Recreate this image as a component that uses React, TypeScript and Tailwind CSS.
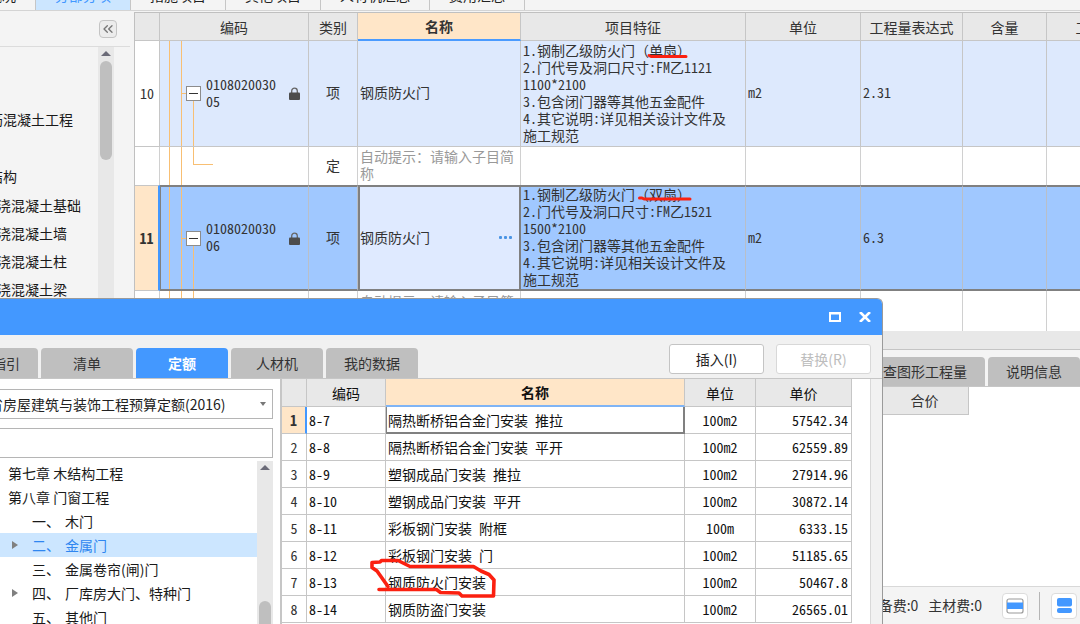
import type { ReactNode } from "react";
import clsx from "clsx";
import { ChevronsLeft } from "lucide-react";

const mainTabs = ["工程概况", "分部分项", "措施项目", "其他项目", "人材机汇总", "费用汇总"];

const dialogTabs = ["清单指引", "清单", "定额", "人材机", "我的数据"];

const chapters = [
  { title: "第七章 木结构工程" },
  { title: "第八章 门窗工程" },
];

const sections = [
  { no: "一、", title: "木门" },
  { no: "二、", title: "金属门", expandable: true, active: true },
  { no: "三、", title: "金属卷帘(闸)门" },
  { no: "四、", title: "厂库房大门、特种门", expandable: true },
  { no: "五、", title: "其他门" },
];

const quotas = [
  { code: "8-7", name: "隔热断桥铝合金门安装 推拉", unit: "100m2", price: "57542.34" },
  { code: "8-8", name: "隔热断桥铝合金门安装 平开", unit: "100m2", price: "62559.89" },
  { code: "8-9", name: "塑钢成品门安装 推拉", unit: "100m2", price: "27914.96" },
  { code: "8-10", name: "塑钢成品门安装 平开", unit: "100m2", price: "30872.14" },
  { code: "8-11", name: "彩板钢门安装 附框", unit: "100m", price: "6333.15" },
  { code: "8-12", name: "彩板钢门安装 门", unit: "100m2", price: "51185.65" },
  { code: "8-13", name: "钢质防火门安装", unit: "100m2", price: "50467.8" },
  { code: "8-14", name: "钢质防盗门安装", unit: "100m2", price: "26565.01" },
];

function LockIcon() {
  return (
    <svg className="h-[13px] w-[11px]" viewBox="0 0 11 13" fill="none">
      <path d="M2.7 6.5V4a2.8 2.8 0 0 1 5.6 0v2.5" stroke="#666" strokeWidth="1.3" />
      <rect y="5.5" width="11" height="7.5" rx="1" fill="#4d4d4d" />
    </svg>
  );
}

function Triangle({ className, points }: { className: string; points: string }) {
  return (
    <svg className={className} viewBox="0 0 10 10" preserveAspectRatio="none">
      <polygon points={points} fill="currentColor" />
    </svg>
  );
}

/* Code cell with the tree guides drawn in front of the number */
function CodeCell({ lines, className }: { lines: string[]; className: string }) {
  return (
    <div className={clsx("flex items-stretch", className)}>
      <div className="w-[10px] border-r border-r-[#f8bf73]" />
      <div className="w-3 border-r border-r-[#f8bf73]" />
      <div className="flex w-6 flex-col">
        <div className="flex-1" />
        <div className="flex items-center">
          <div className="h-px w-1 bg-[#f8bf73]" />
          <button
            aria-label="折叠"
            className="flex h-[15px] w-[15px] items-center justify-center border border-[#8c8c8c] bg-white"
          >
            <span className="h-px w-[9px] bg-[#333]" />
          </button>
        </div>
        <div className="ml-[11px] flex-1 border-l border-l-[#f8bf73]" />
      </div>
      <div className="w-[83px] self-center pb-[2px]">
        {lines.map((line) => (
          <div key={line}>{line}</div>
        ))}
      </div>
      <div className="self-center">
        <LockIcon />
      </div>
    </div>
  );
}

function Features({ kind, model, opening }: { kind: string; model: string; opening: string }) {
  return (
    <div className="-my-px pb-[2px] pl-[2px] whitespace-nowrap">
      <div>
        1.钢制乙级防火门
        <span className="[font-feature-settings:normal]">（{kind}）</span>
      </div>
      <div>2.门代号及洞口尺寸:FM乙{model}</div>
      <div>{opening}</div>
      <div>3.包含闭门器等其他五金配件</div>
      <div>4.其它说明:详见相关设计文件及</div>
      <div>施工规范</div>
    </div>
  );
}

function Th({ children, className }: { children?: ReactNode; className?: string }) {
  return (
    <th
      className={clsx(
        "overflow-hidden border-r border-[#c6c6c6] p-0 text-center whitespace-nowrap",
        className ?? "border-b bg-[#e8e8e8] font-normal"
      )}
    >
      {children}
    </th>
  );
}

function BillSheet() {
  const light = "border-r border-b border-[#c6c6c6] p-0";
  const plain = "border-r border-[#d0d0d0] p-0";
  const picked = "border-y-2 border-r border-y-[#808080] border-r-[#b9bfc8] p-0";

  return (
    <div className="overflow-hidden border-t border-l border-[#c0c0c0] bg-white">
      <table className="w-[1012px] table-fixed border-separate border-spacing-0 text-[14px] text-[#333] [font-feature-settings:'hwid']">
        <colgroup>
          <col className="w-[25px]" />
          <col className="w-[149px]" />
          <col className="w-[49px]" />
          <col className="w-[163px]" />
          <col className="w-[225px]" />
          <col className="w-[115px]" />
          <col className="w-[102px]" />
          <col className="w-[84px]" />
          <col className="w-[100px]" />
        </colgroup>
        <thead className="leading-5">
          <tr className="h-7">
            <Th />
            <Th>编码</Th>
            <Th>类别</Th>
            <Th className="border-b-2 border-b-[#4a9bff] bg-[#ffe6c8] font-bold">名称</Th>
            <Th>项目特征</Th>
            <Th>单位</Th>
            <Th>工程量表达式</Th>
            <Th>含量</Th>
            <Th>工程量</Th>
          </tr>
        </thead>
        <tbody className="leading-[17px]">
          <tr className="h-[106px] bg-[#dde9fd]">
            <td className={clsx(light, "bg-white text-center")}>10</td>
            <td className={light}>
              <CodeCell lines={["0108020030", "05"]} className="h-[105px]" />
            </td>
            <td className={clsx(light, "pb-[2px] text-center")}>项</td>
            <td className={clsx(light, "pb-[2px] pl-[2px]")}>钢质防火门</td>
            <td className={light}>
              <Features kind="单扇" model="1121" opening="1100*2100" />
            </td>
            <td className={clsx(light, "pb-[2px] pl-[2px]")}>m2</td>
            <td className={clsx(light, "pb-[2px] pl-[2px]")}>2.31</td>
            <td className={light} />
            <td className={light} />
          </tr>
          <tr className="h-[38px]">
            <td className={plain} />
            <td className={plain}>
              <div className="flex h-[38px]">
                <div className="w-[10px] border-r border-r-[#f8bf73]" />
                <div className="w-3 border-r border-r-[#f8bf73]" />
                <div className="ml-[11px] h-[18px] w-5 border-b border-l border-[#f8bf73]" />
              </div>
            </td>
            <td className={clsx(plain, "pb-[2px] text-center")}>定</td>
            <td className={clsx(plain, "pb-[2px] pl-[2px] text-[#999]")}>自动提示：请输入子目简称</td>
            <td className={plain} />
            <td className={plain} />
            <td className={plain} />
            <td className={plain} />
            <td className={plain} />
          </tr>
          <tr className="h-[106px] bg-[#a0c8ff]">
            <td className="border-y border-r-2 border-y-[#c6c6c6] border-r-[#4398ff] bg-[#ffe6c8] p-0 text-center font-bold">
              11
            </td>
            <td className={clsx(picked, "border-l border-l-[#808080]")}>
              <CodeCell lines={["0108020030", "06"]} className="-ml-px h-[102px]" />
            </td>
            <td className={clsx(picked, "pb-[2px] text-center")}>项</td>
            <td className="border-2 border-[#808080] bg-[#dfeaff] p-0 pb-[2px]">
              <div className="flex items-center justify-between pr-[7px]">
                <span>钢质防火门</span>
                <button aria-label="选择名称" className="flex h-4 items-center gap-[2px]">
                  <span className="h-[3px] w-[3px] rounded-[1px] bg-[#4a94e4]" />
                  <span className="h-[3px] w-[3px] rounded-[1px] bg-[#4a94e4]" />
                  <span className="h-[3px] w-[3px] rounded-[1px] bg-[#4a94e4]" />
                </button>
              </div>
            </td>
            <td className={picked}>
              <Features kind="双扇" model="1521" opening="1500*2100" />
            </td>
            <td className={clsx(picked, "pb-[2px] pl-[2px]")}>m2</td>
            <td className={clsx(picked, "pb-[2px] pl-[2px]")}>6.3</td>
            <td className={picked} />
            <td className={picked} />
          </tr>
          <tr className="h-10">
            <td className={plain} />
            <td className={plain}>
              <div className="flex h-10">
                <div className="w-[10px] border-r border-r-[#f8bf73]" />
                <div className="w-3 border-r border-r-[#f8bf73]" />
                <div className="ml-[11px] h-5 w-5 border-b border-l border-[#f8bf73]" />
              </div>
            </td>
            <td className={plain} />
            <td className={clsx(plain, "pb-[2px] pl-[2px] text-[#999]")}>自动提示：请输入子目简称</td>
            <td className={plain} />
            <td className={plain} />
            <td className={plain} />
            <td className={plain} />
            <td className={plain} />
          </tr>
        </tbody>
      </table>
    </div>
  );
}

function Sidebar() {
  return (
    <aside className="flex w-[134px] shrink-0 flex-col pr-1">
      <div className="flex h-9 shrink-0 items-center justify-end border-b border-[#dcdcdc] pr-[13px]">
        <button
          aria-label="收起"
          className="flex h-[18px] w-[18px] items-center justify-center rounded-sm border border-[#c4c4c4] bg-[#ececec] text-[#777]"
        >
          <ChevronsLeft size={16} strokeWidth={2} />
        </button>
      </div>
      <div className="flex min-h-0 flex-1 pr-4">
        <ul className="flex-1 overflow-hidden pt-[58px] text-[14px] whitespace-nowrap text-[#1a1a1a]">
          <li className="-ml-[25px] h-[57px] leading-[29px]">钢筋混凝土工程</li>
          <li className="-ml-[25px] leading-[29px]">钢结构</li>
          {["基础", "墙", "柱", "梁"].map((part) => (
            <li key={part} className="-ml-[17px] leading-7">
              现浇混凝土{part}
            </li>
          ))}
        </ul>
        <div className="flex w-4 flex-col items-center bg-[#e8e8e8] pt-1">
          <Triangle className="mb-[5px] h-[5px] w-[10px] text-[#6b6b78]" points="5,0 10,10 0,10" />
          <div className="h-[99px] w-3 rounded-full bg-[#bfbfbf]" />
        </div>
      </div>
    </aside>
  );
}

function DetailPanel() {
  return (
    <section className="flex min-h-0 flex-1 flex-col">
      <div className="h-[19px] border-b border-[#c4c4c4] bg-[#e8e8e8]" />
      <div className="flex gap-[3px] overflow-hidden border-b border-[#c6c6c6] pt-[7px] pl-[717px] text-[14px] text-[#333]">
        <button className="h-[29px] shrink-0 rounded-t-sm bg-[#bfbfbf] px-[18px]">反查图形工程量</button>
        <button className="h-[29px] shrink-0 rounded-t-sm bg-[#bfbfbf] px-[18px]">说明信息</button>
      </div>
      <div className="flex-1 overflow-hidden bg-white pl-[747px]">
        <table className="border-separate border-spacing-0 text-[14px] text-[#333]">
          <thead>
            <tr>
              <th className="h-7 w-[88px] border-r border-b border-[#c6c6c6] bg-[#e8e8e8] p-0 font-normal">
                合价
              </th>
            </tr>
          </thead>
        </table>
      </div>
      <footer className="flex h-[38px] shrink-0 items-center justify-end border-t border-[#d8d8d8] pr-[3px] text-[14px] text-[#333]">
        <span className="mr-[10px]">设备费:0</span>
        <span className="mr-5">主材费:0</span>
        <button
          aria-label="单栏显示"
          className="flex h-[26px] w-[26px] items-center justify-center rounded border border-[#dcdcdc] bg-white"
        >
          <svg className="h-4 w-[18px]" viewBox="0 0 18 16">
            <rect x="1" y="1" width="16" height="14" rx="2" fill="#fff" stroke="#9a9a9a" strokeWidth="1.2" />
            <rect x="1" y="4.5" width="16" height="6.5" fill="#4398ff" />
          </svg>
        </button>
        <span className="mx-[11px] h-7 w-px bg-[#b5b5b5]" />
        <button
          aria-label="双栏显示"
          className="flex h-[26px] w-[26px] items-center justify-center rounded border border-[#dcdcdc] bg-white"
        >
          <svg className="h-[15px] w-[15px]" viewBox="0 0 15 15" fill="#4398ff">
            <rect width="15" height="8.5" rx="2" />
            <rect y="10" width="15" height="5" rx="2" />
          </svg>
        </button>
      </footer>
    </section>
  );
}

function ChapterTree() {
  return (
    <div className="flex min-h-0 flex-1 overflow-hidden pr-[7px]">
      <ul className="flex-1 text-[14px] leading-6 whitespace-nowrap text-[#1a1a1a]">
        {chapters.map((chapter) => (
          <li key={chapter.title} className="pl-2">
            {chapter.title}
          </li>
        ))}
        {sections.map((section) => (
          <li
            key={section.no}
            className={clsx("flex items-center", section.active && "bg-[#cce6ff] text-[#2f86f0]")}
          >
            <span className="flex w-8 pl-3 text-[#808080]">
              {section.expandable && <Triangle className="h-2 w-[6px]" points="0,0 10,5 0,10" />}
            </span>
            <span className="mr-[5px]">{section.no}</span>
            <span>{section.title}</span>
          </li>
        ))}
      </ul>
      <div className="flex w-4 flex-col items-center bg-[#e8e8e8] pt-1">
        <Triangle className="mb-[131px] h-[5px] w-[10px] shrink-0 text-[#6b6b78]" points="5,0 10,10 0,10" />
        <div className="h-20 w-3 shrink-0 rounded-full bg-[#bfbfbf]" />
      </div>
    </div>
  );
}

function QuotaTable() {
  const cell = "border-r border-b border-[#c6c6c6] p-0";

  return (
    <table className="w-full table-fixed border-separate border-spacing-0 text-[14px] leading-5 text-[#111] [font-feature-settings:'hwid']">
      <colgroup>
        <col className="w-[25px]" />
        <col className="w-[79px]" />
        <col />
        <col className="w-[71px]" />
        <col className="w-[96px]" />
      </colgroup>
      <thead>
        <tr className="h-7">
          <Th />
          <Th>编码</Th>
          <Th className="border-b-2 border-b-[#7fb4f5] bg-[#ffe6c8] font-bold">名称</Th>
          <Th>单位</Th>
          <Th>单价</Th>
        </tr>
      </thead>
      <tbody>
        {quotas.map((quota, i) => (
          <tr key={quota.code} className="h-[27px]">
            <td
              className={clsx(
                "border-b border-b-[#c6c6c6] p-0 text-center text-[#333]",
                i === 0 ? "border-r-2 border-r-[#4398ff] bg-[#ffe6c8] font-bold" : "border-r border-r-[#c6c6c6]"
              )}
            >
              {i + 1}
            </td>
            <td className={clsx(cell, "pl-[2px]")}>{quota.code}</td>
            <td
              className={clsx(
                "whitespace-nowrap",
                i === 0
                  ? "border-r-2 border-b-2 border-l border-[#808080] p-0 pl-px"
                  : "border-r border-b border-[#c6c6c6] p-0 pl-[2px]"
              )}
            >
              {quota.name}
            </td>
            <td className={clsx(cell, "text-center")}>{quota.unit}</td>
            <td className={clsx(cell, "pr-[3px] text-right")}>{quota.price}</td>
          </tr>
        ))}
      </tbody>
    </table>
  );
}

function QueryDialog() {
  return (
    <div
      role="dialog"
      aria-label="查询"
      className="absolute top-[298px] bottom-0 left-0 flex w-[883px] flex-col overflow-hidden rounded-tr-md border-t border-r border-[#9a9a9a] bg-[#f1f1f1]"
    >
      <header className="flex h-9 shrink-0 items-center justify-end gap-[18px] bg-[#4398ff] pr-[11px]">
        <button aria-label="最大化">
          <svg className="h-[10px] w-3" viewBox="0 0 12 10" fill="none" stroke="#fff" strokeWidth="2">
            <rect x="1" y="1" width="10" height="8" />
            <path d="M0 1.5h12" />
          </svg>
        </button>
        <button aria-label="关闭">
          <svg className="h-[10px] w-3" viewBox="0 0 12 10" fill="none" stroke="#fff" strokeWidth="2.6">
            <path d="M1 0l10 10M11 0L1 10" />
          </svg>
        </button>
      </header>
      <div className="flex h-11 shrink-0 items-end justify-between border-b border-[#c6c6c6] pr-[11px] text-[14px]">
        <div className="-ml-[54px] flex gap-[3px]">
          {dialogTabs.map((tab) => (
            <button
              key={tab}
              className={clsx(
                "h-[30px] w-[92px] rounded-t-sm",
                tab === "定额" ? "bg-[#4398ff] font-bold text-white" : "bg-[#bfbfbf] text-[#333]"
              )}
            >
              {tab}
            </button>
          ))}
        </div>
        <div className="mb-1 flex gap-3">
          <button className="h-[30px] w-[95px] rounded-[3px] border border-[#c4c4c4] bg-white text-[#222]">
            插入(I)
          </button>
          <button
            disabled
            className="h-[30px] w-[95px] rounded-[3px] border border-[#d8d8d8] bg-white text-[#bdbdbd]"
          >
            替换(R)
          </button>
        </div>
      </div>
      <div className="flex min-h-0 flex-1">
        <div className="flex w-[282px] shrink-0 flex-col overflow-hidden border-r-2 border-[#c6c6c6] bg-white pt-[10px]">
          <div className="relative mr-[7px] -ml-6 shrink-0">
            <select
              aria-label="定额库"
              className="h-[30px] w-full appearance-none border border-[#b5b5b5] bg-white pl-3 text-[14px] text-[#222]"
            >
              <option>省房屋建筑与装饰工程预算定额(2016)</option>
            </select>
            <Triangle
              className="pointer-events-none absolute top-[13px] right-[7px] h-1 w-[6px] text-[#777]"
              points="0,0 10,0 5,10"
            />
          </div>
          <input
            type="text"
            aria-label="搜索"
            className="mt-[9px] mr-[7px] mb-[3px] -ml-6 h-[30px] shrink-0 border border-[#b5b5b5] bg-white pl-8 text-[14px]"
          />
          <ChapterTree />
        </div>
        <div className="mr-[11px] flex-1 overflow-hidden border-r border-[#d8d8d8] bg-white pr-[18px]">
          <QuotaTable />
        </div>
      </div>
    </div>
  );
}

/* Red pen marks laid over the sheet and the dialog */
function PenMarks() {
  return (
    <svg
      className="pointer-events-none absolute top-0 left-0 h-[624px] w-[1080px]"
      viewBox="0 0 1080 624"
      fill="none"
      stroke="#fb2010"
      strokeLinejoin="round"
      strokeLinecap="round"
    >
      <path d="M649 55.5L651 56.5H686" strokeWidth="3" />
      <path d="M639.5 198H642L644 199H690" strokeWidth="3" />
      <path
        d="M379 589.5H436.5L440.5 592.5L459 593L462 596H493.5L494 580L489 574.5L481 571L473.5 566.5H410L398 560.5H381.5L380 562L372 562.5V567.5L377 571L388 586.5"
        strokeWidth="3.6"
      />
    </svg>
  );
}

export default function App() {
  return (
    <div className="relative flex h-screen flex-col overflow-hidden bg-[#f4f4f4] font-['Noto_Sans_CJK_SC',sans-serif]">
      <nav className="flex h-[11px] shrink-0 items-end overflow-hidden border-b border-[#d4d4d4]">
        <div className="-ml-[59px] flex text-[14px] text-[#222]">
          {mainTabs.map((tab) => (
            <button
              key={tab}
              className={clsx(
                "h-[30px] border-r border-[#c6c6c6] px-[19px] whitespace-nowrap",
                tab === "分部分项" && "bg-[#cce6ff] text-[#4398ff]"
              )}
            >
              {tab}
            </button>
          ))}
        </div>
      </nav>
      <div className="flex min-h-0 flex-1">
        <Sidebar />
        <main className="flex min-w-0 flex-1 flex-col pt-px">
          <BillSheet />
          <DetailPanel />
        </main>
      </div>
      <QueryDialog />
      <PenMarks />
    </div>
  );
}
